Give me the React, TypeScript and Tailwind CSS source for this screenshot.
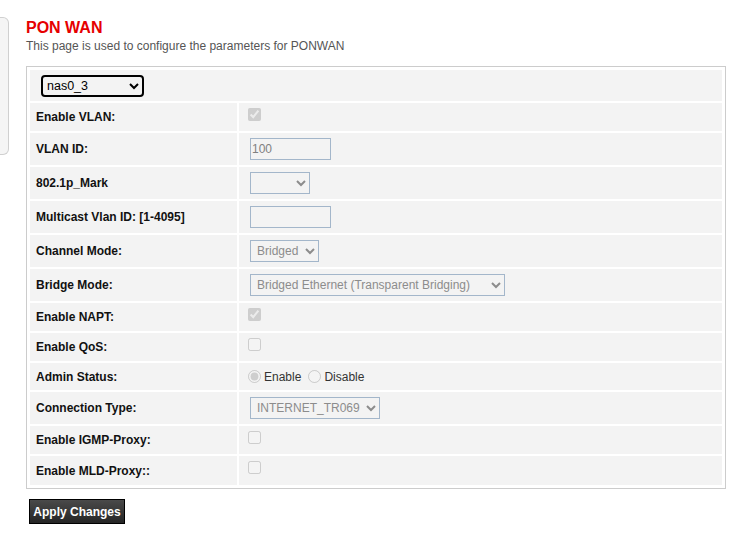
import React from "react";

const rowBg = "bg-[#f3f3f3]";

function LabelCell({ children }: { children: React.ReactNode }) {
  return (
    <div className={`${rowBg} w-[207px] shrink-0 pl-[6px] flex items-center text-[12px] font-bold text-[#111]`}>
      {children}
    </div>
  );
}

function Row({
  label,
  h,
  children,
  top = false,
}: {
  label: string;
  h: string;
  children: React.ReactNode;
  top?: boolean;
}) {
  return (
    <div className={`flex gap-[2px] ${h}`}>
      <LabelCell>{label}</LabelCell>
      <div className={`${rowBg} flex-1 flex ${top ? "items-start pt-[5px]" : "items-center"} pl-[9px]`}>
        {children}
      </div>
    </div>
  );
}

function Check({ checked = false }: { checked?: boolean }) {
  return <input type="checkbox" disabled defaultChecked={checked} className="m-0 w-[13px] h-[13px]" />;
}

const selectCls =
  "h-[22px] border border-[#a3b6ca] bg-transparent text-[12px] text-[#8c8c8c] pl-[2px] ml-[2px]";

const inputCls =
  "ml-[2px] w-[81px] h-[22px] border border-[#a3b6ca] bg-transparent text-[12px] text-[#808080] px-[1px]";

export default function App() {
  return (
    <div className="flex min-h-[540px] bg-white font-['Liberation_Sans',Arial,sans-serif]">
      <div className="mt-[17px] h-[138px] w-[9px] shrink-0 rounded-r-[6px] border border-l-0 border-[#d0d0d0] bg-[#f5f5f5]" />
      <div className="ml-[17px] w-[700px] pt-[19px]">
        <h1 className="text-[16px] leading-[18px] font-bold text-[#e60000]">PON WAN</h1>
        <p className="mt-[2px] text-[12px] leading-[14px] text-[#555]">
          This page is used to configure the parameters for PONWAN
        </p>

        <div className="mt-[13px] border border-[#cccccc] p-[3px] flex flex-col gap-[2px]">
          <div className={`${rowBg} h-[31px] flex items-center pl-[11px]`}>
            <select
              defaultValue="nas0_3"
              className="w-[103px] h-[22px] border-2 border-black rounded-[4px] bg-transparent text-[12.5px] text-black pl-0"
            >
              <option value="nas0_3">nas0_3</option>
            </select>
          </div>

          <Row label="Enable VLAN:" h="h-[28px]" top>
            <Check checked />
          </Row>

          <Row label="VLAN ID:" h="h-[32px]">
            <input disabled defaultValue="100" className={inputCls} />
          </Row>

          <Row label="802.1p_Mark" h="h-[32px]">
            <select disabled className={`${selectCls} w-[60px]`}>
              <option></option>
            </select>
          </Row>

          <Row label="Multicast Vlan ID: [1-4095]" h="h-[32px]">
            <input disabled className={inputCls} />
          </Row>

          <Row label="Channel Mode:" h="h-[32px]">
            <select disabled className={`${selectCls} w-[69px]`}>
              <option>Bridged</option>
            </select>
          </Row>

          <Row label="Bridge Mode:" h="h-[32px]">
            <select disabled className={`${selectCls} w-[255px]`}>
              <option>Bridged Ethernet (Transparent Bridging)</option>
            </select>
          </Row>

          <Row label="Enable NAPT:" h="h-[28px]" top>
            <Check checked />
          </Row>

          <Row label="Enable QoS:" h="h-[28px]" top>
            <Check />
          </Row>

          <Row label="Admin Status:" h="h-[27px]">
            <div className="flex items-center text-[12px] text-[#333]">
              <input type="radio" name="admin" disabled defaultChecked className="m-0 mr-[3px] w-[13px] h-[13px]" />
              <span>Enable</span>
              <input type="radio" name="admin" disabled className="m-0 ml-[7px] mr-[3px] w-[13px] h-[13px]" />
              <span>Disable</span>
            </div>
          </Row>

          <Row label="Connection Type:" h="h-[32px]">
            <select disabled className={`${selectCls} w-[130px]`}>
              <option>INTERNET_TR069</option>
            </select>
          </Row>

          <Row label="Enable IGMP-Proxy:" h="h-[28px]" top>
            <Check />
          </Row>

          <Row label="Enable MLD-Proxy::" h="h-[29px]" top>
            <Check />
          </Row>
        </div>

        <button
          type="button"
          className="block mt-[10px] ml-[3px] w-[96px] h-[25px] border border-black bg-gradient-to-b from-[#4a4a4a] to-[#262626] text-white text-[12px] font-bold leading-none"
        >
          Apply Changes
        </button>
      </div>
    </div>
  );
}
